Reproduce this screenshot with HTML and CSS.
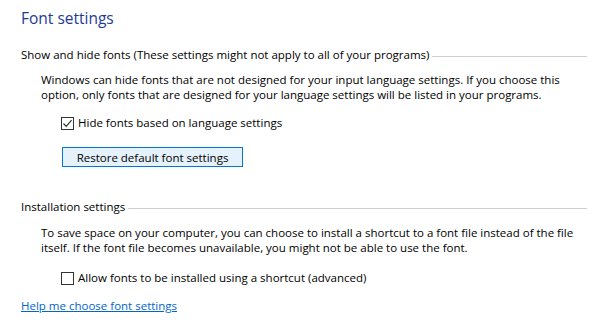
FILE: index.html
```html
<!DOCTYPE html>
<html lang="en">
<head>
    <meta charset="UTF-8">
    <title>Font settings</title>
    <link rel="stylesheet" href="styles.css">
</head>
<body>
    <h1 class="title">Font settings</h1>

    <!-- Show and hide fonts -->
    <div class="group">
        <div class="group-head">
            <span>Show and hide fonts (These settings might not apply to all of your programs)</span>
            <span class="rule"></span>
        </div>
        <p class="note">Windows can hide fonts that are not designed for your input language settings. If you choose this option, only fonts that are designed for your language settings will be listed in your programs.</p>
        <label class="check">
            <span class="box">
                <svg width="11" height="11" viewBox="0 0 11 11"><path d="M1.5 5.5 L4.2 8.3 L9.6 2.2" fill="none" stroke="#333" stroke-width="1.2"/></svg>
            </span>
            Hide fonts based on language settings
        </label>
        <button class="btn">Restore default font settings</button>
    </div>

    <!-- Installation settings -->
    <div class="group group-install">
        <div class="group-head">
            <span>Installation settings</span>
            <span class="rule"></span>
        </div>
        <p class="note">To save space on your computer, you can choose to install a shortcut to a font file instead of the file itself. If the font file becomes unavailable, you might not be able to use the font.</p>
        <label class="check">
            <span class="box"></span>
            Allow fonts to be installed using a shortcut (advanced)
        </label>
    </div>

    <a class="help" href="#">Help me choose font settings</a>
</body>
</html>
```

FILE: styles.css
```css
/* Global */
body {
    margin: 0;
    padding: 7px 19px 0 21px;
    font-family: 'Segoe UI', 'Open Sans', sans-serif;
    font-size: 11.5px;
    color: #000;
    background: #fff;
}

.title {
    margin: 0;
    font-size: 15.5px;
    font-weight: normal;
    line-height: 22px;
    color: #1e3a96;
}

/* Group header with rule */
.group {
    margin-top: 18px;
}

.group-install {
    margin-top: 32px;
}

.group-head {
    display: flex;
    align-items: center;
    line-height: 16px;
}

.rule {
    flex: 1;
    height: 1px;
    margin-left: 3px;
    margin-top: 2px;
    background: #cfcfcf;
}

.note {
    margin: 9px 0 0 20px;
    line-height: 15px;
    padding-right: 6px;
}

.group-install .note {
    margin-top: 10px;
}

/* Checkbox rows */
.check {
    display: flex;
    align-items: center;
    gap: 4px;
    margin: 13px 0 0 40px;
    line-height: 16px;
}

.group-install .check {
    margin-top: 15px;
}

.box {
    width: 11px;
    height: 11px;
    border: 1px solid #333;
    display: flex;
    align-items: center;
    justify-content: center;
}

/* Button */
.btn {
    display: block;
    margin: 16px 0 0 41px;
    width: 181px;
    height: 20px;
    padding: 0;
    font-family: inherit;
    font-size: 11.5px;
    color: #000;
    background: #e5f1fb;
    border: 1px solid #0078d7;
}

/* Link */
.help {
    display: inline-block;
    margin-top: 12px;
    color: #0066cc;
    line-height: 16px;
}
```
